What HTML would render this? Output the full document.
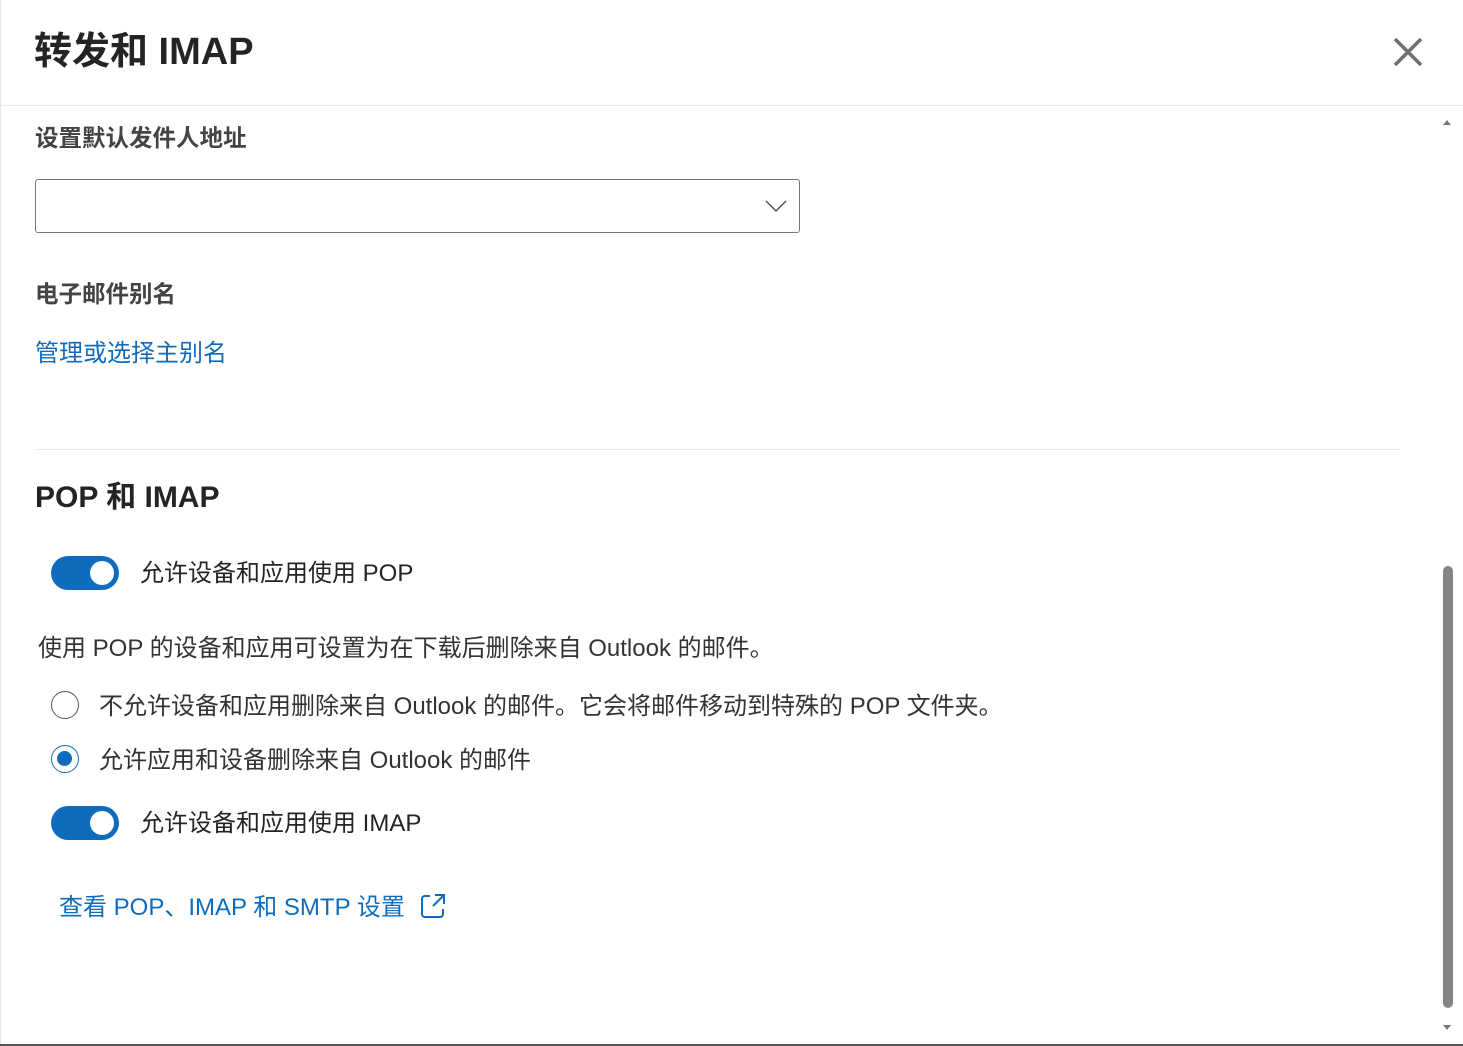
<!DOCTYPE html>
<html><head><meta charset="utf-8"><style>
*{margin:0;padding:0;box-sizing:border-box}
body{width:1463px;height:1046px;background:#fff;position:relative;overflow:hidden;font-family:"Liberation Sans","Noto Sans CJK SC",sans-serif;color:#242424}
.a{position:absolute;white-space:nowrap;line-height:1}
.lbl{font-size:23.5px;font-weight:bold;color:#444}
.body{font-size:24px;color:#242424}
.link{font-size:24px;color:#0f6cbd}
.tog{position:absolute;width:68px;height:34px;border-radius:17px;background:#0f6cbd}
.tog:after{content:"";position:absolute;right:5px;top:5px;width:24px;height:24px;border-radius:50%;background:#fff}
.rad{position:absolute;width:28px;height:28px;border-radius:50%;border:1.5px solid #555}
</style></head><body>
<div style="position:absolute;left:0;top:0;width:1px;height:1046px;background:#e6e6e6"></div>
<div class="a" style="left:34px;top:33px;font-size:38px;font-weight:bold;color:#242424">转发和 IMAP</div>
<svg style="position:absolute;left:1392px;top:36px" width="32" height="32" viewBox="0 0 32 32"><path d="M3 3L29 29M29 3L3 29" stroke="#707070" stroke-width="3.5"/></svg>
<div style="position:absolute;left:0;top:105px;width:1463px;height:1px;background:#ebebeb"></div>
<div class="a lbl" style="left:35px;top:127px">设置默认发件人地址</div>
<div style="position:absolute;left:35px;top:179px;width:765px;height:54px;border:1px solid #777;border-radius:3px"></div>
<svg style="position:absolute;left:764px;top:198px" width="24" height="16" viewBox="0 0 24 16"><path d="M2 3L12 13L22 3" stroke="#555" stroke-width="1.5" fill="none"/></svg>
<div class="a lbl" style="left:35px;top:283px">电子邮件别名</div>
<div class="a link" style="left:35px;top:342px">管理或选择主别名</div>
<div style="position:absolute;left:35px;top:449px;width:1365px;height:1px;background:#ebebeb"></div>
<div class="a" style="left:35px;top:483px;font-size:30px;font-weight:bold">POP 和 IMAP</div>
<div class="tog" style="left:51px;top:556px"></div>
<div class="a body" style="left:140px;top:562px">允许设备和应用使用 POP</div>
<div class="a body" style="left:38px;top:637px;color:#333">使用 POP 的设备和应用可设置为在下载后删除来自 Outlook 的邮件。</div>
<div class="rad" style="left:51px;top:691px"></div>
<div class="a body" style="left:99px;top:695px;color:#333">不允许设备和应用删除来自 Outlook 的邮件。它会将邮件移动到特殊的 POP 文件夹。</div>
<div class="rad" style="left:51px;top:745px;border-color:#0f6cbd"><div style="position:absolute;left:5px;top:5px;width:15px;height:15px;border-radius:50%;background:#0f6cbd"></div></div>
<div class="a body" style="left:99px;top:749px;color:#333">允许应用和设备删除来自 Outlook 的邮件</div>
<div class="tog" style="left:51px;top:806px"></div>
<div class="a body" style="left:140px;top:812px">允许设备和应用使用 IMAP</div>
<div class="a link" style="left:59px;top:896px">查看 POP、IMAP 和 SMTP 设置</div>
<svg style="position:absolute;left:420px;top:893px" width="26" height="26" viewBox="0 0 26 26"><path d="M10 3H5a3 3 0 0 0-3 3v15a3 3 0 0 0 3 3h15a3 3 0 0 0 3-3v-5M15 2h9v9M24 2L13 13" stroke="#0f6cbd" stroke-width="2" fill="none"/></svg>
<svg style="position:absolute;left:1442px;top:118px" width="10" height="8"><path d="M1 7L5 2L9 7Z" fill="#777"/></svg>
<div style="position:absolute;left:1443px;top:566px;width:10px;height:442px;border-radius:5px;background:#858585"></div>
<svg style="position:absolute;left:1442px;top:1024px" width="10" height="8"><path d="M1 1L5 6L9 1Z" fill="#777"/></svg>
<div style="position:absolute;left:0;top:1044px;width:1463px;height:2px;background:#555"></div>
</body></html>
